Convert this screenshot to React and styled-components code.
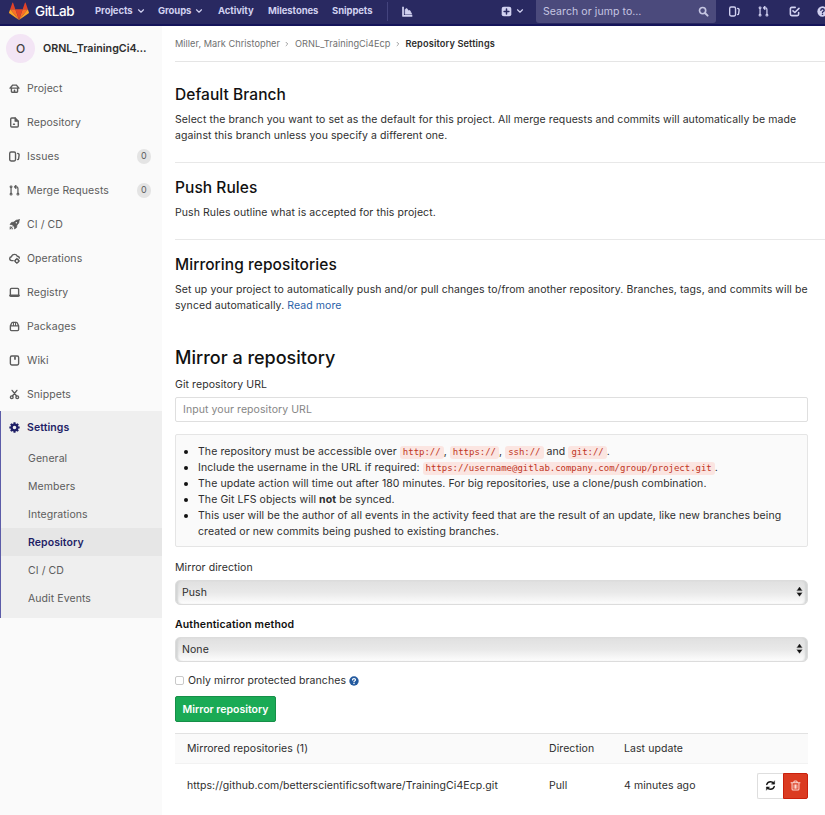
import React from "react";
import styled, { createGlobalStyle, css } from "styled-components";

const GlobalStyle = createGlobalStyle`
  * { box-sizing: border-box; }
  html, body { margin: 0; padding: 0; }
  body {
    width: 825px;
    height: 815px;
    overflow: hidden;
    background: #fff;
    color: #2e2e2e;
    font-family: Inter, "Liberation Sans", sans-serif;
    font-size: 10.5px;
    line-height: 16px;
    letter-spacing: 0.08px;
  }
`;

const Page = styled.div`
  width: 825px;
  height: 815px;
  display: flex;
  flex-direction: column;
  overflow: hidden;
`;

/* ---------- top bar ---------- */
const TopBar = styled.header`
  height: 26px;
  flex: none;
  display: flex;
  align-items: center;
  padding-bottom: 2px;
  background: #292961;
  border-bottom: 2px solid #14145a;
  color: #d1d1f0;
  overflow: hidden;
`;
const Brand = styled.div`
  display: flex;
  align-items: center;
  gap: 6px;
  width: 85px;
  padding-left: 9px;
  color: #fff;
  font-size: 13.5px;
  font-weight: 500;
  letter-spacing: -0.45px;
  flex: none;
`;
const NavItem = styled.a`
  display: flex;
  align-items: center;
  flex: none;
  gap: 4px;
  width: ${(p) => p.$w}px;
  padding-left: 10px;
  font-size: 9.5px;
  font-weight: 700;
  letter-spacing: -0.08px;
  white-space: nowrap;
`;
const NavDivider = styled.span`
  width: 1px;
  height: 19px;
  flex: none;
  background: #44447e;
`;
const NavIcon = styled.span`
  display: flex;
  justify-content: center;
  align-items: center;
  gap: 4px;
  flex: none;
  width: ${(p) => p.$w}px;
  padding-left: ${(p) => p.$pl || 0}px;
`;
const Search = styled.div`
  display: flex;
  align-items: center;
  align-self: flex-start;
  justify-content: space-between;
  flex: none;
  width: 180px;
  height: 23px;
  padding: 0 7px;
  border-radius: 0 0 3px 3px;
  background: #4b4a7c;
  color: #c6c6e2;
`;

/* ---------- sidebar ---------- */
const Body = styled.div`
  display: flex;
  flex: 1;
  min-height: 0;
`;
const Sidebar = styled.nav`
  width: 162px;
  flex: none;
  background: #fafafa;
  color: #5c5c5c;
`;
const ProjectTitle = styled.div`
  display: flex;
  align-items: center;
  gap: 8px;
  height: 45px;
  padding-left: 6px;
  color: #2e2e2e;
  font-size: 10.7px;
  font-weight: 600;
  letter-spacing: 0;
`;
const Avatar = styled.span`
  width: 29px;
  height: 29px;
  border-radius: 50%;
  display: flex;
  align-items: center;
  justify-content: center;
  background: #f3e5f5;
  color: #444;
  font-size: 12px;
  font-weight: 500;
`;
const ItemText = styled.span`
  padding-top: 2px;
`;
const SideItem = styled.a`
  display: flex;
  align-items: center;
  height: ${(p) => (p.$active ? 33 : 34)}px;
  padding: 0 11px 0 9px;
  gap: 7px;
  ${(p) =>
    p.$active &&
    css`
      color: #1f1f66;
      font-weight: 600;
      padding-left: 8px;
    `}
`;
const Count = styled.span`
  margin-left: auto;
  width: 14px;
  height: 15px;
  border-radius: 7px;
  background: #e4e4e4;
  display: flex;
  justify-content: center;
  align-items: center;
  font-size: 9px;
`;
const ActiveGroup = styled.div`
  height: 207px;
  background: #efefef;
  border-left: 1px solid #5c5ca8;
`;
const SubItem = styled.a`
  display: flex;
  align-items: center;
  height: 28px;
  padding-left: 27px;
  ${(p) =>
    p.$active &&
    css`
      background: #e6e6e6;
      color: #1f1f66;
      font-weight: 600;
    `}
`;

/* ---------- content ---------- */
const Content = styled.main`
  flex: 1;
  min-width: 0;
  padding-left: 13px;
`;
const Breadcrumbs = styled.div`
  display: flex;
  align-items: center;
  gap: 4.5px;
  height: 36px;
  border-bottom: 1px solid #e5e5e5;
  color: #707070;
  font-size: 9.2px;
  letter-spacing: 0.03px;
  strong { color: #2e2e2e; font-weight: 600; letter-spacing: 0.14px; }
`;
const Section = styled.section`
  padding: ${(p) => (p.$first ? 23 : 15)}px 0 ${(p) => (p.$last ? 0 : 18)}px;
  border-bottom: ${(p) => (p.$last ? 0 : 1)}px solid #e8e8e8;
`;
const Heading = styled.h4`
  margin: 0 0 7px;
  color: #111;
  font-size: 15.5px;
  line-height: 20px;
  font-weight: 500;
  letter-spacing: 0.06px;
`;
const Text = styled.p`
  margin: 0;
  white-space: nowrap;
`;
const Link = styled.a`
  color: #2a62a8;
`;
const FormTitle = styled.h3`
  margin: 32px 0 6px;
  color: #111;
  font-size: 18px;
  line-height: 24px;
  font-weight: 500;
  letter-spacing: 0;
`;
const Form = styled.div`
  width: 633px;
`;
const Label = styled.div`
  margin-top: ${(p) => p.$mt}px;
  margin-bottom: 4px;
  padding-top: 1px;
  ${(p) => p.$bold && "font-weight: 600; color: #111; letter-spacing: 0.14px;"}
`;
const Input = styled.div`
  height: 25px;
  border: 1px solid #dfdfdf;
  border-radius: 2px;
  padding: 4px 7px;
  color: #868686;
`;
const Well = styled.div`
  margin-top: 12px;
  height: 113px;
  border: 1px solid #e5e5e5;
  border-radius: 2px;
  background: #fafafa;
  padding: 9px 0 0 22px;
  ul { margin: 0; padding: 0; list-style: none; }
`;
const Bullet = styled.li`
  height: ${(p) => (p.$lines || 1) * 16}px;
  display: flex;
  white-space: nowrap;
  &::before {
    content: "";
    width: 4px;
    height: 4px;
    border-radius: 50%;
    background: #111;
    margin: 6px 10px 0 -14px;
    flex: none;
  }
`;
const Code = styled.code`
  display: inline-block;
  height: 13px;
  line-height: 13px;
  padding: 0 3px;
  border-radius: 3px;
  background: #fbe5e1;
  color: #c0341d;
  font-family: "DejaVu Sans Mono", monospace;
  font-size: 9px;
  letter-spacing: -0.02px;
`;
const Select = styled.div`
  display: flex;
  align-items: center;
  justify-content: space-between;
  height: 25px;
  padding: 0 2px 2px 6px;
  border: 1px solid #dcdcdc;
  border-radius: 5px;
  background: linear-gradient(#e0e0e0, #e9e9e9 50%, #fdfdfd);
  box-shadow: inset 3px 0 2px -1px #d2d4d4, inset -3px 0 2px -1px #d2d4d4;
`;
const SelectValue = styled.span`
  padding-top: 3px;
`;
const CheckRow = styled.div`
  display: flex;
  align-items: center;
  height: 16px;
  margin-top: 11px;
  gap: 4px;
`;
const Checkbox = styled.span`
  width: 9px;
  height: 9px;
  margin-bottom: 1px;
  border: 1px solid #c9c9c9;
  border-radius: 2px;
  background: #fff;
`;
const SubmitButton = styled.button`
  display: block;
  margin: 7px 0 11px;
  width: 101px;
  height: 26px;
  padding: 2px 0 0;
  border: 1px solid #168f48;
  border-radius: 2px;
  background: #1aaa55;
  color: #fff;
  font: 600 10.5px/16px Inter, sans-serif;
  white-space: nowrap;
`;
const TableRow = styled.div`
  display: grid;
  grid-template-columns: 362px 75px 133px 1fr;
  align-items: center;
  height: 43px;
  padding-left: 12px;
  ${(p) =>
    p.$head &&
    css`
      height: 31px;
      background: #fafafa;
      border-top: 1px solid #e2e2e2;
      border-bottom: 1px solid #f2f2f2;
    `}
`;
const Url = styled.span`
  letter-spacing: 0.06px;
`;
const Actions = styled.div`
  display: flex;
  width: 51px;
`;
const IconButton = styled.span`
  display: flex;
  align-items: center;
  justify-content: center;
  width: ${(p) => (p.$danger ? 25 : 26)}px;
  height: 26px;
  border: 1px solid ${(p) => (p.$danger ? "#c9200c" : "#dedede")};
  border-right-width: ${(p) => (p.$danger ? 1 : 0)}px;
  border-radius: ${(p) => (p.$danger ? "0 2px 2px 0" : "2px 0 0 2px")};
  background: ${(p) => (p.$danger ? "#db3b21" : "#fff")};
`;

/* ---------- icons ---------- */
const Svg = styled.svg`
  width: ${(p) => p.$s || 11}px;
  height: ${(p) => p.$s || 11}px;
  flex: none;
  display: block;
  fill: none;
  stroke: currentColor;
  stroke-width: 2;
  stroke-linejoin: round;
  stroke-linecap: round;
`;
const glyphs = {
  home: <><path d="M1.500 7.500 5.500 3h5l4 4.500Z" /><path d="M3.500 8v4.500q0 1 1 1h7q1 0 1-1V8" /><path d="M8 10.500V13" /></>,
  doc: <><path d="M9 1.500H4q-1.500 0-1.500 1.500v10q0 1.500 1.500 1.500h8q1.500 0 1.500-1.500V6Z" /><path d="M9 1.500V6h4.500" fill="currentColor" /><path d="M6.500 10.500h1.500" /></>,
  issues: <><rect x="1" y="1.500" width="8.500" height="13" rx="2" /><path d="M12.500 3.500q2.500.3 2.200 2.500l-.7 5q-.2 1.500-1.500 1.500" /></>,
  merge: <><circle cx="3" cy="13.300" r="1.400" strokeWidth="1.500" /><circle cx="13" cy="13.300" r="1.400" strokeWidth="1.500" /><circle cx="3" cy="2.700" r="1.400" strokeWidth="1.500" /><path d="M3 4.500v7M13 11.500V5q0-2.200-2-2.200H8.500M10 .8l-2 2 2 2" strokeWidth="1.800" /></>,
  rocket: <><path d="M15 1q-5-.3-8 3.500L3.500 5 1.500 8l3 .2 3.300 3.300.2 3 3-2 .5-3.500Q15.300 6 15 1Z" fill="currentColor" strokeWidth="1" /><circle cx="10.700" cy="5.300" r="1.100" fill="#fafafa" stroke="none" /><path d="m4.500 11.500-3 3M2 11.500l-.5.5M5 14l-.5.5" strokeWidth="1.500" /></>,
  cloud: <><path d="M6 11H4Q1 10.700 1 8q0-2 2.500-2.500Q4.500 2 8 2q3 0 4 2.800Q15 5 15 7.500" /><circle cx="11.500" cy="11.500" r="2.500" /><path d="M11.500 8v1M11.500 14v1M8 11.500h1M14 11.500h1" /></>,
  disk: <><rect x="2" y="2" width="12" height="11.500" rx="1.500" /><path d="M2 12.500h12" strokeWidth="3.500" /></>,
  pack: <><path d="M2 7v5.500q0 1.500 1.500 1.500h9q1.500 0 1.500-1.500V7ZM2 7l2-4q.5-1 1.500-1h5q1 0 1.500 1l2 4" /><path d="M6.500 2v4.500M9.500 2v4.500" strokeWidth="1.500" /></>,
  book: <><rect x="2" y="1.500" width="12" height="13" rx="2" /><path d="M8.700 2v5" strokeWidth="2.500" strokeLinecap="butt" /></>,
  scissors: <><circle cx="4" cy="12" r="2" /><circle cx="12" cy="12" r="2" /><path d="M5 10.200 11.500 2M11 10.200 4.500 2" /></>,
  gear: <><circle cx="8" cy="8" r="4.200" strokeWidth="3.200" /><path d="M8 .5v3M8 12.500v3M.5 8h3M12.500 8h3M2.700 2.700l2 2M11.300 11.300l2 2M2.700 13.300l2-2M11.300 4.700l2-2" strokeWidth="3" strokeLinecap="butt" /></>,
  down: <path d="m3 5.500 5 5 5-5" strokeWidth="2.300" />,
  right: <path d="m5.500 3.500 4.500 4.500-4.500 4.500" strokeWidth="1.800" />,
  chart: <><path d="M1.500 1v13.500h13.500" strokeWidth="2.500" strokeLinecap="butt" /><path d="M4.500 11.500V5l2.500-1.500 2.500 3.500 2-.5 2.500 5Z" fill="currentColor" strokeWidth="1" /></>,
  plus: <><rect x="1" y="1" width="14" height="14" rx="3" fill="currentColor" stroke="none" /><path d="M8 4.500v7M4.500 8h7" stroke="#292961" strokeWidth="2.200" /></>,
  search: <><circle cx="6.700" cy="6.700" r="4.500" strokeWidth="2.400" /><path d="m10.500 10.500 3.500 3.500" strokeWidth="2.800" /></>,
  todo: <><path d="M9 2H4Q2 2 2 4v8q0 2 2 2h8q2 0 2-2V9.500" strokeWidth="2.300" /><path d="m5.800 7 2.700 2.500 6-6" strokeWidth="2.300" /></>,
  help: <><circle cx="8" cy="8" r="7.500" fill="currentColor" stroke="none" /><path d="M5.600 6.200Q5.700 4 8 4t2.400 2q0 1.300-1.400 2-1 .5-1 1.300" stroke="var(--mark)" strokeWidth="2" /><circle cx="8" cy="12" r="1.200" fill="var(--mark)" stroke="none" /></>,
  sort: <><path d="M4.500 6.500 8 1.500l3.500 5ZM4.500 10l3.500 5 3.500-5Z" fill="currentColor" strokeWidth=".5" /></>,
  sync: <><path d="M2.500 6.500Q4 2.500 8 2.500q3 0 4.700 2.500M13.500 9.500Q12 13.500 8 13.500q-3 0-4.700-2.500" /><path d="M14 1.500v4.500H9.500ZM2 14.500V10h4.500Z" fill="currentColor" strokeWidth=".5" /></>,
  trash: <><path d="M1.500 4h13M5.500 3.500q0-2 1.500-2h2q1.500 0 1.500 2M3 5v8q0 1.500 1.500 1.500h7Q13 14.500 13 13V5M6 7v5M8 7v5M10 7v5" strokeWidth="1.500" /></>,
};
const Icon = ({ name, size, className }) => (
  <Svg viewBox="0 0 16 16" $s={size} className={className} aria-hidden="true">
    {glyphs[name]}
  </Svg>
);
const HelpLight = styled(Icon)`
  --mark: #292961;
`;
const HelpBlue = styled(Icon)`
  --mark: #fff;
  color: #235a9f;
  margin-left: -1px;
`;
const TrashIcon = styled(Icon)`
  color: #fbd9d3;
`;
const DarkIcon = styled(Icon)`
  color: #111;
`;
const LogoSvg = styled.svg`
  width: 20px;
  height: 18px;
  flex: none;
`;
const Logo = () => (
  <LogoSvg viewBox="0 0 586 559" preserveAspectRatio="none" aria-label="GitLab">
    <path fill="#e24329" d="M293 559 401 227H185Z" />
    <path fill="#fc6d26" d="M293 559 185 227H34ZM293 559 401 227h151Z" />
    <path fill="#fca326" d="M34 227 1 328q-4 14 7 23l285 208ZM552 227l33 101q4 14-7 23L293 559Z" />
    <path fill="#e24329" d="M34 227h151L120 27q-10-18-20 0ZM552 227H401l65-200q10-18 20 0Z" />
  </LogoSvg>
);

const sideItems = [
  ["home", "Project"],
  ["doc", "Repository"],
  ["issues", "Issues", 0],
  ["merge", "Merge Requests", 0],
  ["rocket", "CI / CD"],
  ["cloud", "Operations"],
  ["disk", "Registry"],
  ["pack", "Packages"],
  ["book", "Wiki"],
  ["scissors", "Snippets"],
];
const subItems = ["General", "Members", "Integrations", "Repository", "CI / CD", "Audit Events"];

export default function App() {
  return (
    <Page>
      <GlobalStyle />
      <TopBar>
        <Brand><Logo />GitLab</Brand>
        <NavItem $w={63}>Projects<Icon name="down" size={8} /></NavItem>
        <NavItem $w={60}>Groups<Icon name="down" size={8} /></NavItem>
        <NavItem $w={50}>Activity</NavItem>
        <NavItem $w={64}>Milestones</NavItem>
        <NavItem $w={65}>Snippets</NavItem>
        <NavDivider />
        <NavIcon $w={38}><Icon name="chart" /></NavIcon>
        <NavIcon $w={110} $pl={62}><Icon name="plus" /><Icon name="down" size={8} /></NavIcon>
        <Search>Search or jump to…<Icon name="search" /></Search>
        <NavIcon $w={37}><Icon name="issues" /></NavIcon>
        <NavIcon $w={21}><Icon name="merge" /></NavIcon>
        <NavIcon $w={40}><Icon name="todo" /></NavIcon>
        <NavIcon $w={16}><HelpLight name="help" /></NavIcon>
      </TopBar>
      <Body>
        <Sidebar>
          <ProjectTitle><Avatar>O</Avatar>ORNL_TrainingCi4…</ProjectTitle>
          {sideItems.map(([icon, label, count]) => (
            <SideItem key={label}>
              <Icon name={icon} />
              <ItemText>{label}</ItemText>
              {count !== undefined && <Count>{count}</Count>}
            </SideItem>
          ))}
          <ActiveGroup>
            <SideItem $active><Icon name="gear" />Settings</SideItem>
            {subItems.map((label) => (
              <SubItem key={label} $active={label === "Repository"}><ItemText>{label}</ItemText></SubItem>
            ))}
          </ActiveGroup>
        </Sidebar>
        <Content>
          <Breadcrumbs>
            <span>Miller, Mark Christopher</span>
            <Icon name="right" size={6} />
            <span>ORNL_TrainingCi4Ecp</span>
            <Icon name="right" size={6} />
            <strong>Repository Settings</strong>
          </Breadcrumbs>
          <Section $first>
            <Heading>Default Branch</Heading>
            <Text>
              Select the branch you want to set as the default for this project. All merge requests and commits will automatically be made<br />
              against this branch unless you specify a different one.
            </Text>
          </Section>
          <Section>
            <Heading>Push Rules</Heading>
            <Text>Push Rules outline what is accepted for this project.</Text>
          </Section>
          <Section $last>
            <Heading>Mirroring repositories</Heading>
            <Text>
              Set up your project to automatically push and/or pull changes to/from another repository. Branches, tags, and commits will be<br />
              synced automatically. <Link>Read more</Link>
            </Text>
          </Section>
          <Form>
            <FormTitle>Mirror a repository</FormTitle>
            <Label $mt={0}>Git repository URL</Label>
            <Input>Input your repository URL</Input>
            <Well>
              <ul>
                <Bullet><span>The repository must be accessible over <Code>http://</Code>, <Code>https://</Code>, <Code>ssh://</Code> and <Code>git://</Code>.</span></Bullet>
                <Bullet><span>Include the username in the URL if required: <Code>https://username@gitlab.company.com/group/project.git</Code>.</span></Bullet>
                <Bullet><span>The update action will time out after 180 minutes. For big repositories, use a clone/push combination.</span></Bullet>
                <Bullet><span>The Git LFS objects will <b>not</b> be synced.</span></Bullet>
                <Bullet $lines={2}><span>This user will be the author of all events in the activity feed that are the result of an update, like new branches being<br />created or new commits being pushed to existing branches.</span></Bullet>
              </ul>
            </Well>
            <Label $mt={12}>Mirror direction</Label>
            <Select><SelectValue>Push</SelectValue><DarkIcon name="sort" /></Select>
            <Label $mt={11} $bold>Authentication method</Label>
            <Select><SelectValue>None</SelectValue><DarkIcon name="sort" /></Select>
            <CheckRow><Checkbox />Only mirror protected branches <HelpBlue name="help" size={10} /></CheckRow>
            <SubmitButton>Mirror repository</SubmitButton>
            <TableRow $head><span>Mirrored repositories (1)</span><span>Direction</span><span>Last update</span></TableRow>
            <TableRow>
              <Url>https://github.com/betterscientificsoftware/TrainingCi4Ecp.git</Url>
              <span>Pull</span>
              <span>4 minutes ago</span>
              <Actions>
                <IconButton><DarkIcon name="sync" /></IconButton>
                <IconButton $danger><TrashIcon name="trash" /></IconButton>
              </Actions>
            </TableRow>
          </Form>
        </Content>
      </Body>
    </Page>
  );
}
